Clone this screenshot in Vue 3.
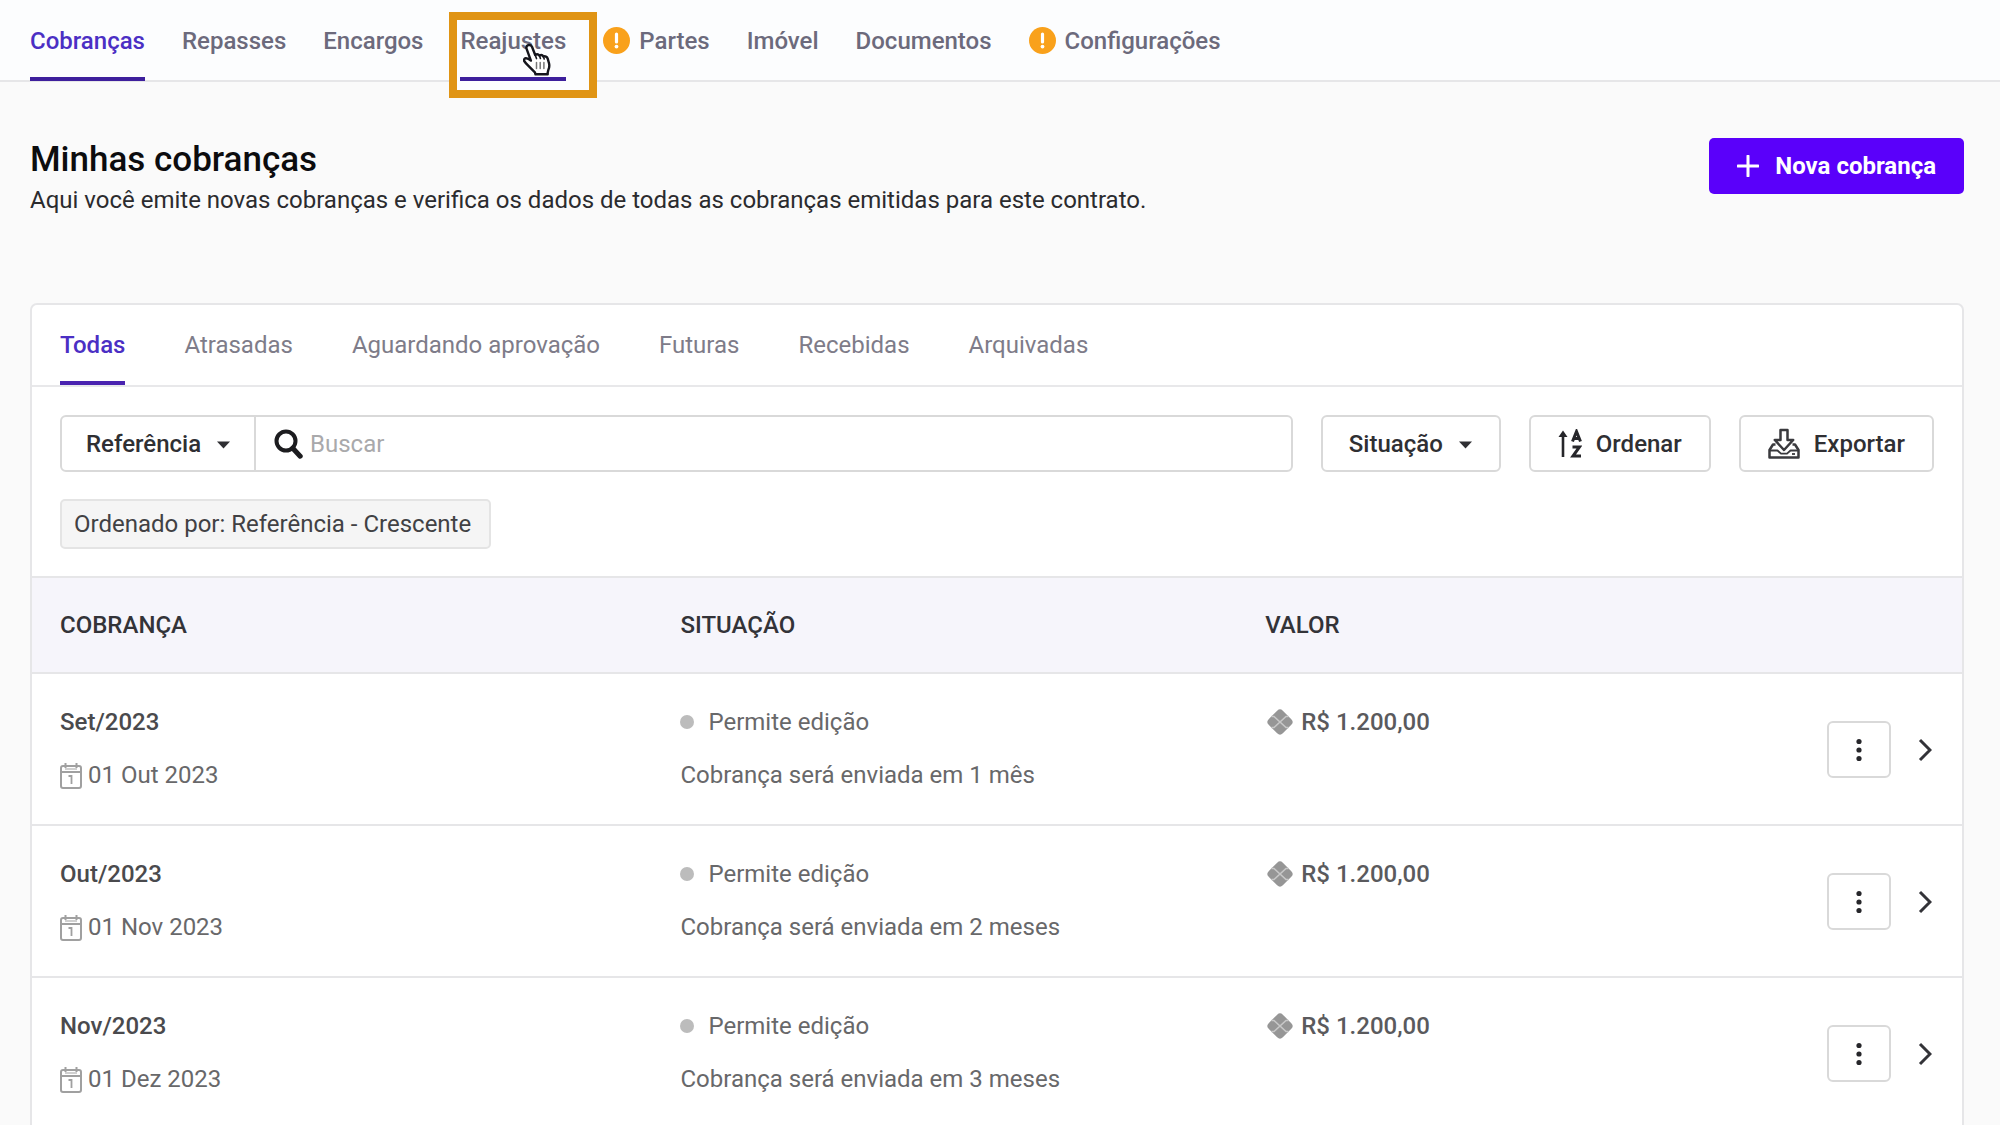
<script setup>
import { ref } from 'vue'

const sections = [
  { label: 'Cobranças', active: true },
  { label: 'Repasses' },
  { label: 'Encargos' },
  { label: 'Reajustes', highlighted: true },
  { label: 'Partes', warning: true },
  { label: 'Imóvel' },
  { label: 'Documentos' },
  { label: 'Configurações', warning: true },
]

const filters = ['Todas', 'Atrasadas', 'Aguardando aprovação', 'Futuras', 'Recebidas', 'Arquivadas']
const currentFilter = ref('Todas')
const search = ref('')

const charges = [
  { reference: 'Set/2023', due: '01 Out 2023', note: 'Cobrança será enviada em 1 mês' },
  { reference: 'Out/2023', due: '01 Nov 2023', note: 'Cobrança será enviada em 2 meses' },
  { reference: 'Nov/2023', due: '01 Dez 2023', note: 'Cobrança será enviada em 3 meses' },
]
</script>

<template>
  <div class="page">
    <nav class="sections" aria-label="Seções do contrato">
      <a
        v-for="s in sections"
        :key="s.label"
        href="#"
        class="section"
        :class="{ active: s.active, highlighted: s.highlighted }"
      >
        <svg v-if="s.warning" class="warning" viewBox="0 0 27 27" aria-hidden="true">
          <circle cx="13.5" cy="13.5" r="13.5" fill="#f9a11b" />
          <path d="M13.5 7v8" stroke="#fff" stroke-width="3.2" stroke-linecap="round" />
          <circle cx="13.5" cy="19.6" r="1.9" fill="#fff" />
        </svg>
        <span>{{ s.label }}</span>
        <template v-if="s.highlighted">
          <span class="frame"></span>
          <svg class="pointer" viewBox="0 0 28 33" aria-hidden="true">
            <path
              d="M5.2 2.2c1.700-.7 3.200.1 3.900 1.800l3.100 8c1.400-1 3.200-.7 4.200.6 1.400-.8 3.200-.4 4 .9 1.700-.7 3.700.1 4.300 2.100l1.300 4.700c.6 2.300.3 4.400-.6 6.400l-.7 2.800v1.800H12.500l-.6-1.900-6.700-6.700c-1.900-1.900-3.200-3.400-4-4.700-.7-1.200.1-2.500 1.500-2.700 1.600-.2 3.200.6 5.200 2.300L3.600 5.800c-.6-1.600.1-3 1.600-3.600z"
              fill="#fff" stroke="#15151c" stroke-width="2.400" stroke-linejoin="round"
            />
            <path d="M12.200 12l1.300 3.600M16.400 12.600l1 2.900M20.400 13.500l.8 2.400" stroke="#15151c" stroke-width="1.600" stroke-linecap="round" />
            <path d="M13.500 19.500v6M17.200 19.500v6M20.900 19.500v6" stroke="#777" stroke-width="1.500" stroke-linecap="round" />
          </svg>
        </template>
      </a>
    </nav>

    <main class="content">
      <header class="heading">
        <div>
          <h1>Minhas cobranças</h1>
          <p>Aqui você emite novas cobranças e verifica os dados de todas as cobranças emitidas para este contrato.</p>
        </div>
        <button type="button" class="primary">
          <svg width="22" height="22" viewBox="0 0 22 22" aria-hidden="true">
            <path d="M11 1v20M1 11h20" stroke="#fff" stroke-width="3" stroke-linecap="round" />
          </svg>
          Nova cobrança
        </button>
      </header>

      <section class="card">
        <div class="filters" role="tablist">
          <button
            v-for="f in filters"
            :key="f"
            type="button"
            role="tab"
            class="filter"
            :class="{ active: f === currentFilter }"
            :aria-selected="f === currentFilter"
            @click="currentFilter = f"
          >{{ f }}</button>
        </div>

        <div class="tools">
          <div class="search">
            <div class="dropdown field">
              <select aria-label="Campo de busca"><option>Referência</option></select>
              <svg class="caret" viewBox="0 0 13 8" aria-hidden="true"><path d="M0 .500h13L6.500 7.500z" /></svg>
            </div>
            <label class="query">
              <svg width="29" height="30" viewBox="0 0 29 30" aria-hidden="true">
                <circle cx="12" cy="12" r="9.500" fill="none" stroke="#1c1c1f" stroke-width="4" />
                <path d="M18.800 19.200l7.400 8" stroke="#1c1c1f" stroke-width="5" stroke-linecap="round" />
              </svg>
              <input v-model="search" type="text" placeholder="Buscar" aria-label="Buscar" />
            </label>
          </div>
          <div class="dropdown outlined">
            <select aria-label="Situação"><option>Situação</option></select>
            <svg class="caret" viewBox="0 0 13 8" aria-hidden="true"><path d="M0 .500h13L6.500 7.500z" /></svg>
          </div>
          <button type="button" class="outlined action">
            <svg width="24" height="30" viewBox="0 0 24 30" fill="none" stroke="#26262a" aria-hidden="true">
              <path d="M5 28V4" stroke-width="2.600" />
              <path d="M.5 8L5 1.500 9.500 8z" fill="#26262a" stroke="none" />
              <path d="M14.500 12.500L18.500 2.500l4 10M15.800 9.600h5.400" stroke-width="3" />
              <path d="M14.500 18H21.500l-6.500 9H23" stroke-width="3" />
            </svg>
            Ordenar
          </button>
          <button type="button" class="outlined action">
            <svg width="32" height="32" viewBox="0 0 32 32" fill="none" stroke="#3a3a3e" stroke-width="2.500" stroke-linejoin="round" aria-hidden="true">
              <path d="M12.500 2h7v10h5.700L16 22 6.800 12h5.700z" />
              <path d="M7.500 16.500H5L1.500 22v7.500h29V22L27 16.500h-2.500" />
              <path d="M1.500 22.500h8l3.500 3.200h6l3.500-3.200h8" stroke-width="1.800" />
              <path d="M24 26h3" stroke-width="1.800" />
            </svg>
            Exportar
          </button>
        </div>

        <div class="applied">
          <span class="chip">Ordenado por: Referência - Crescente</span>
        </div>

        <table>
          <thead>
            <tr>
              <th scope="col" class="col-charge">COBRANÇA</th>
              <th scope="col" class="col-status">SITUAÇÃO</th>
              <th scope="col">VALOR</th>
              <th class="col-actions"></th>
            </tr>
          </thead>
          <tbody>
            <tr v-for="c in charges" :key="c.reference">
              <td>
                <div class="line reference">{{ c.reference }}</div>
                <div class="line date">
                  <svg width="22" height="27" viewBox="0 0 22 27" fill="none" stroke="#a0a0a0" stroke-width="2" aria-hidden="true">
                    <rect x="1" y="4" width="20" height="22" rx="2" />
                    <path d="M1 10h20M5.500 1v5M16.500 1v5" />
                    <path d="M5 7h12" stroke="#d0d0d0" />
                    <path d="M8.500 14h3V22" stroke-width="1.800" />
                  </svg>
                  {{ c.due }}
                </div>
              </td>
              <td>
                <div class="line status"><span class="dot"></span>Permite edição</div>
                <div class="line">{{ c.note }}</div>
              </td>
              <td>
                <div class="line amount">
                  <svg width="30" height="30" viewBox="0 0 30 30" aria-hidden="true">
                    <rect x="5" y="5" width="20" height="20" rx="4" fill="#969696" transform="rotate(45 15 15)" />
                    <path d="M6.500 9.500h2.500l6 5.500 6-5.500h2.500M6.500 20.500h2.500l6-5.500 6 5.500h2.500" fill="none" stroke="#c8c8c8" stroke-width="1.600" />
                  </svg>
                  R$ 1.200,00
                </div>
              </td>
              <td>
                <div class="actions">
                  <button type="button" class="outlined more" :aria-label="'Opções de ' + c.reference">
                    <svg width="6" height="24" viewBox="0 0 6 24" fill="#26262a" aria-hidden="true">
                      <circle cx="3" cy="3.500" r="2.600" /><circle cx="3" cy="12" r="2.600" /><circle cx="3" cy="20.500" r="2.600" />
                    </svg>
                  </button>
                  <a href="#" :aria-label="'Abrir ' + c.reference">
                    <svg width="14" height="24" viewBox="0 0 14 24" aria-hidden="true">
                      <path d="M2 2l10 10L2 22" fill="none" stroke="#333338" stroke-width="3" />
                    </svg>
                  </a>
                </div>
              </td>
            </tr>
          </tbody>
        </table>
      </section>
    </main>
  </div>
</template>

<style>
html {
  scrollbar-width: none;
}
body {
  margin: 0;
  background: #fafafa;
}
</style>

<style scoped>
* {
  box-sizing: border-box;
}
.page {
  font-family: Roboto, "Liberation Sans", sans-serif;
  font-size: 24px;
  line-height: 36px;
  color: #68686a;
}
button,
select,
input {
  font: inherit;
  color: inherit;
  margin: 0;
}
button {
  cursor: pointer;
}
svg {
  display: block;
  flex: none;
}

.sections {
  display: flex;
  gap: 37px;
  height: 82px;
  padding: 0 30px;
  background: #fcfdfe;
  border-bottom: 2px solid #e6e6e8;
}
.section {
  position: relative;
  display: flex;
  align-items: center;
  gap: 9px;
  height: 81px;
  padding-top: 4px;
  border-bottom: 4px solid transparent;
  color: #6c6a7c;
  font-weight: 500;
  text-decoration: none;
}
.section.active {
  color: #4b2fc4;
  border-color: #3d1f9c;
}
.section.highlighted {
  z-index: 0;
}
.section.highlighted::after {
  content: "";
  position: absolute;
  left: 0;
  right: 0;
  bottom: -4px;
  height: 4px;
  background: #3d1f9c;
}
.warning {
  width: 27px;
  height: 27px;
}
.frame {
  position: absolute;
  z-index: -1;
  top: 12px;
  left: -11px;
  right: -31px;
  height: 86px;
  border: 8px solid #e09414;
  background: #fcfdfe;
}
.pointer {
  position: absolute;
  top: 43px;
  left: 63px;
  width: 28px;
  height: 33px;
}

.content {
  padding: 56px 36px 0 30px;
}
.heading {
  display: flex;
  justify-content: space-between;
  align-items: flex-start;
  padding-bottom: 85px;
}
h1 {
  margin: 0;
  font-size: 35px;
  line-height: 44px;
  font-weight: 500;
  color: #0c0c0e;
}
p {
  margin: 0;
  color: #2b2b2e;
}
.primary {
  display: flex;
  align-items: center;
  gap: 16px;
  height: 56px;
  padding: 0 28px;
  border: 0;
  border-radius: 5px;
  background: #5a00fa;
  color: #fff;
  font-weight: 700;
  white-space: nowrap;
}

.card {
  background: #fff;
  border: 2px solid #e6e6e8;
  border-radius: 7px;
}
.filters {
  display: flex;
  gap: 59px;
  height: 82px;
  padding: 0 28px;
  border-bottom: 2px solid #e8e8ea;
}
.filter {
  height: 80px;
  padding: 4px 0 0;
  border: 0;
  border-bottom: 4px solid transparent;
  background: none;
  color: #7e7c89;
}
.filter.active {
  color: #4b2fc4;
  border-color: #4a23b0;
  font-weight: 500;
}

.tools {
  display: flex;
  gap: 28px;
  padding: 28px 28px 0;
}
.search {
  display: flex;
  flex: 1;
  height: 57px;
  border: 2px solid #d9d9d9;
  border-radius: 6px;
}
.dropdown {
  position: relative;
  color: #2f2f33;
  font-weight: 500;
}
.dropdown select {
  appearance: none;
  width: 100%;
  height: 100%;
  padding: 0 24px;
  border: 0;
  background: transparent;
}
.caret {
  position: absolute;
  top: 50%;
  right: 24px;
  width: 13px;
  height: 8px;
  margin-top: -3px;
  fill: #2f2f33;
  pointer-events: none;
}
.field {
  width: 194px;
  border-right: 2px solid #d9d9d9;
}
.query {
  display: flex;
  flex: 1;
  align-items: center;
  gap: 7px;
  padding: 0 18px;
}
.query input {
  flex: 1;
  min-width: 0;
  padding: 0;
  border: 0;
  outline: 0;
  background: none;
  color: #2f2f33;
}
.query input::placeholder {
  color: #a9a9ab;
}
.outlined {
  height: 57px;
  border: 2px solid #d9d9d9;
  border-radius: 6px;
  background: #fff;
}
.dropdown.outlined {
  width: 180px;
}
.outlined select {
  padding: 0 26px;
}
.outlined .caret {
  right: 27px;
}
.action {
  display: flex;
  align-items: center;
  gap: 14px;
  padding: 0 27px;
  color: #2f2f33;
  font-weight: 500;
}
.applied {
  display: flex;
  padding: 27px 28px;
}
.chip {
  height: 50px;
  padding: 5px 18px 5px 12px;
  border: 2px solid #e4e4e4;
  border-radius: 5px;
  background: #f5f5f5;
  color: #414144;
}

table {
  width: 100%;
  border-collapse: separate;
  border-spacing: 0;
  table-layout: fixed;
}
th {
  height: 98px;
  padding: 0;
  border: solid #e6e6e8;
  border-width: 2px 0;
  background: #f6f5fb;
  color: #333338;
  font-weight: 500;
  text-align: left;
}
td {
  padding: 30px 0 29px;
  border-bottom: 2px solid #e6e6e8;
  vertical-align: top;
}
th:first-child,
td:first-child {
  padding-left: 28px;
}
.col-charge {
  width: 33.6%;
}
.col-status {
  width: 30.3%;
}
.col-actions {
  width: 163px;
}
.line {
  display: flex;
  align-items: center;
  height: 36px;
  white-space: nowrap;
}
.line + .line {
  margin-top: 17px;
}
.reference {
  color: #4a4a4d;
  font-weight: 500;
}
.date {
  gap: 6px;
}
.status {
  gap: 14px;
}
.dot {
  width: 14px;
  height: 14px;
  border-radius: 50%;
  background: #bcbcbc;
}
.amount {
  gap: 6px;
  color: #5a5a5d;
  font-weight: 500;
}
.actions {
  display: flex;
  align-items: center;
  gap: 27px;
  height: 91px;
  padding-left: 28px;
}
.more {
  display: flex;
  align-items: center;
  justify-content: center;
  width: 64px;
  padding: 0;
}
</style>
